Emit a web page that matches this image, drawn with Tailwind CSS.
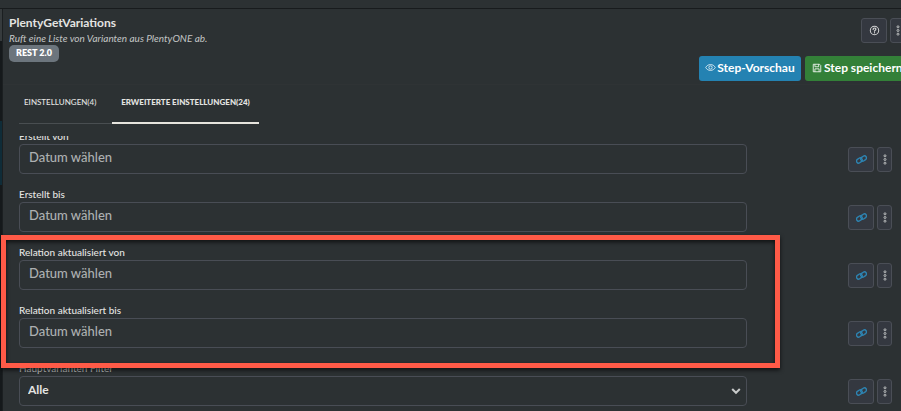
<!DOCTYPE html>
<html lang="de">
<head>
    <meta charset="UTF-8">
    <meta name="viewport" content="width=device-width, initial-scale=1.0">
    <title>PlentyGetVariations</title>
    <script src="https://cdn.jsdelivr.net/npm/@tailwindcss/browser@4"></script>
</head>
<body class="bg-[#2c3133] text-[#e4e4e2] font-['Lato','Noto_Sans',sans-serif] h-screen overflow-hidden relative flex flex-col">
    <!-- Icons -->
    <svg class="hidden">
        <symbol id="icon-link" viewBox="0 0 12 12" fill="none" stroke="currentColor" stroke-width="1.5">
            <rect x="0.4" y="4.900" width="6.600" height="4.400" rx="2.200" transform="rotate(-35 3.700 7.100)"/>
            <rect x="5" y="2.700" width="6.600" height="4.400" rx="2.200" transform="rotate(-35 8.300 4.900)"/>
        </symbol>
        <symbol id="icon-dots" viewBox="0 0 4 12" fill="none" stroke="currentColor" stroke-width="1">
            <circle cx="2" cy="2" r="1.1"/>
            <circle cx="2" cy="6" r="1.1"/>
            <circle cx="2" cy="10" r="1.1"/>
        </symbol>
        <symbol id="icon-help" viewBox="0 0 12 12" fill="none" stroke="currentColor" stroke-linecap="round">
            <circle cx="6" cy="6" r="4.6" stroke-width="1.1"/>
            <path d="M4.5 4.8c0-2 3-2 3-.1 0 1-1.5 1-1.5 2.1M6 8.4v.1" stroke-width="1.3"/>
        </symbol>
        <symbol id="icon-eye" viewBox="0 0 12 12" fill="none" stroke="currentColor" stroke-width="1">
            <path d="M.8 6C3 1.7 9 1.7 11.2 6 9 10.3 3 10.3.8 6Z"/>
            <circle cx="6" cy="6" r="1.8"/>
        </symbol>
        <symbol id="icon-save" viewBox="0 0 12 12" fill="none" stroke="currentColor" stroke-width="1.2">
            <path d="M1.5 1.5H9L10.5 3v7.500h-9zM3.500 1.500v3H8v-3M3.500 10.500V7h5v3.500"/>
        </symbol>
    </svg>

    <!-- obere Leiste -->
    <div class="h-2 shrink-0"></div>

    <div class="flex flex-1 min-h-0 border-t border-[#181b1d]">
        <!-- linker Rand -->
        <div class="w-[3px] shrink-0 flex flex-col bg-[#15191b] border-r border-[#1b1f21]">
            <div class="h-8 bg-[#363b3d]"></div>
            <div class="h-20"></div>
            <div class="h-16 bg-[#0f2c38]"></div>
        </div>

        <main class="flex-1 min-w-0 flex flex-col">
            <!-- Kopfbereich -->
            <header class="h-[76px] shrink-0 flex justify-between pl-[6px] border-b border-[#2f3335]">
                <div class="pt-[6px]">
                    <h1 class="text-[12px] leading-4 font-bold">PlentyGetVariations</h1>
                    <p class="text-[10px] leading-[14px] italic text-[#c3c5c5]">Ruft eine Liste von Varianten aus PlentyONE ab.</p>
                    <span class="inline-block align-top bg-[#6c757d] rounded-[5px] px-[7px] h-[17px] text-[9px] leading-[15px] font-extrabold text-white">REST 2.0</span>
                </div>
                <div class="pt-[9px] flex flex-col items-end">
                    <div class="flex gap-[3px] -mr-1">
                        <button type="button" aria-label="Hilfe" class="w-[26px] h-[25px] flex items-center justify-center rounded-[3px] border border-[#4a4e56] bg-[#343840]">
                            <svg class="size-[11px] text-[#d4d5d5]"><use href="#icon-help"/></svg>
                        </button>
                        <button type="button" aria-label="Mehr" class="w-[15px] h-[25px] flex items-center justify-center rounded-[3px] border border-[#4a4e56] bg-[#343840]">
                            <svg class="w-1 h-[11px] text-[#c3c5c5]"><use href="#icon-dots"/></svg>
                        </button>
                    </div>
                    <div class="flex gap-1 mt-[13px] -mr-2">
                        <button type="button" class="w-[102px] h-[25px] pb-[2px] flex items-center justify-center gap-px rounded-[3px] bg-[#2482b2] text-white text-[12px] leading-4 font-bold whitespace-nowrap">
                            <svg class="size-[11px] text-white/80"><use href="#icon-eye"/></svg>Step-Vorschau
                        </button>
                        <button type="button" class="w-[104px] h-[25px] pb-[2px] flex items-center pl-[7px] gap-[2px] rounded-[3px] bg-[#338038] text-white text-[12px] leading-4 font-bold whitespace-nowrap">
                            <svg class="size-[10px] text-white/80"><use href="#icon-save"/></svg>Step speichern
                        </button>
                    </div>
                </div>
            </header>

            <!-- Tabs -->
            <nav class="flex shrink-0 pl-4 h-[39px] mb-3 text-[8px] leading-4">
                <a href="#einstellungen" class="w-[93px] pl-[5px] pt-[9px] font-medium border-b border-[#494e51]">EINSTELLUNGEN(4)</a>
                <a href="#erweitert" class="w-[147px] text-center pt-[9px] font-black border-b-2 border-[#e6e4de]">ERWEITERTE EINSTELLUNGEN(24)</a>
            </nav>

            <!-- Felder -->
            <form class="flex-1 min-h-0 overflow-hidden pl-4 pr-[9px]">
                <div class="-mt-2 flex flex-col gap-3">
                    <div class="flex">
                        <div class="flex-1 mr-[101px]">
                            <label for="erstelltVon" class="block text-[10px] leading-4 font-medium">Erstellt von</label>
                            <input type="text" id="erstelltVon" placeholder="Datum wählen" class="block w-full h-[30px] px-[9px] pb-1 rounded-[4px] border border-[#494d55] text-[13px] font-medium placeholder:text-[#adb0b1]">
                        </div>
                        <div class="flex gap-[3px] pt-[19px]">
                            <button type="button" aria-label="Verknüpfen" class="w-[26px] h-[25px] flex items-center justify-center rounded-[3px] border border-[#4a4e56] bg-[#343840] text-[#2d84b2]"><svg class="size-[11px]"><use href="#icon-link"/></svg></button>
                            <button type="button" aria-label="Mehr" class="w-[15px] h-[25px] flex items-center justify-center rounded-[3px] border border-[#4a4e56] bg-[#343840] text-[#c3c5c5]"><svg class="w-1 h-[11px]"><use href="#icon-dots"/></svg></button>
                        </div>
                    </div>
                    <div class="flex">
                        <div class="flex-1 mr-[101px]">
                            <label for="erstelltBis" class="block text-[10px] leading-4 font-medium">Erstellt bis</label>
                            <input type="text" id="erstelltBis" placeholder="Datum wählen" class="block w-full h-[30px] px-[9px] pb-1 rounded-[4px] border border-[#494d55] text-[13px] font-medium placeholder:text-[#adb0b1]">
                        </div>
                        <div class="flex gap-[3px] pt-[19px]">
                            <button type="button" aria-label="Verknüpfen" class="w-[26px] h-[25px] flex items-center justify-center rounded-[3px] border border-[#4a4e56] bg-[#343840] text-[#2d84b2]"><svg class="size-[11px]"><use href="#icon-link"/></svg></button>
                            <button type="button" aria-label="Mehr" class="w-[15px] h-[25px] flex items-center justify-center rounded-[3px] border border-[#4a4e56] bg-[#343840] text-[#c3c5c5]"><svg class="w-1 h-[11px]"><use href="#icon-dots"/></svg></button>
                        </div>
                    </div>
                    <div class="flex">
                        <div class="flex-1 mr-[101px]">
                            <label for="relationVon" class="block text-[10px] leading-4 font-medium">Relation aktualisiert von</label>
                            <input type="text" id="relationVon" placeholder="Datum wählen" class="block w-full h-[30px] px-[9px] pb-1 rounded-[4px] border border-[#494d55] text-[13px] font-medium placeholder:text-[#adb0b1]">
                        </div>
                        <div class="flex gap-[3px] pt-[19px]">
                            <button type="button" aria-label="Verknüpfen" class="w-[26px] h-[25px] flex items-center justify-center rounded-[3px] border border-[#4a4e56] bg-[#343840] text-[#2d84b2]"><svg class="size-[11px]"><use href="#icon-link"/></svg></button>
                            <button type="button" aria-label="Mehr" class="w-[15px] h-[25px] flex items-center justify-center rounded-[3px] border border-[#4a4e56] bg-[#343840] text-[#c3c5c5]"><svg class="w-1 h-[11px]"><use href="#icon-dots"/></svg></button>
                        </div>
                    </div>
                    <div class="flex">
                        <div class="flex-1 mr-[101px]">
                            <label for="relationBis" class="block text-[10px] leading-4 font-medium">Relation aktualisiert bis</label>
                            <input type="text" id="relationBis" placeholder="Datum wählen" class="block w-full h-[30px] px-[9px] pb-1 rounded-[4px] border border-[#494d55] text-[13px] font-medium placeholder:text-[#adb0b1]">
                        </div>
                        <div class="flex gap-[3px] pt-[19px]">
                            <button type="button" aria-label="Verknüpfen" class="w-[26px] h-[25px] flex items-center justify-center rounded-[3px] border border-[#4a4e56] bg-[#343840] text-[#2d84b2]"><svg class="size-[11px]"><use href="#icon-link"/></svg></button>
                            <button type="button" aria-label="Mehr" class="w-[15px] h-[25px] flex items-center justify-center rounded-[3px] border border-[#4a4e56] bg-[#343840] text-[#c3c5c5]"><svg class="w-1 h-[11px]"><use href="#icon-dots"/></svg></button>
                        </div>
                    </div>
                    <div class="flex">
                        <div class="flex-1 mr-[101px]">
                            <label for="hauptvarianten" class="block text-[10px] leading-4 font-medium text-[#b5b7b7]">Hauptvarianten Filter</label>
                            <div class="relative">
                                <select id="hauptvarianten" class="block appearance-none w-full h-[30px] px-2 pb-[2px] rounded-[4px] border border-[#494d55] bg-[#2c3133] text-[12px] font-bold">
                                    <option>Alle</option>
                                </select>
                                <svg class="absolute right-[6px] top-[10px] size-[10px] pointer-events-none text-[#c8caca]" viewBox="0 0 10 10" fill="none" stroke="currentColor" stroke-width="2"><path d="M1.2 3 5 6.8 8.8 3"/></svg>
                            </div>
                        </div>
                        <div class="flex gap-[3px] pt-[19px]">
                            <button type="button" aria-label="Verknüpfen" class="w-[26px] h-[25px] flex items-center justify-center rounded-[3px] border border-[#4a4e56] bg-[#343840] text-[#2d84b2]"><svg class="size-[11px]"><use href="#icon-link"/></svg></button>
                            <button type="button" aria-label="Mehr" class="w-[15px] h-[25px] flex items-center justify-center rounded-[3px] border border-[#4a4e56] bg-[#343840] text-[#c3c5c5]"><svg class="w-1 h-[11px]"><use href="#icon-dots"/></svg></button>
                        </div>
                    </div>
                </div>
            </form>
        </main>
    </div>

    <!-- Markierung -->
    <div class="absolute left-px right-[121px] top-[235px] h-[133px] border-5 border-[#ff5a47] pointer-events-none drop-shadow-[0_2px_2px_rgba(0,0,0,0.7)]"></div>
</body>
</html>
